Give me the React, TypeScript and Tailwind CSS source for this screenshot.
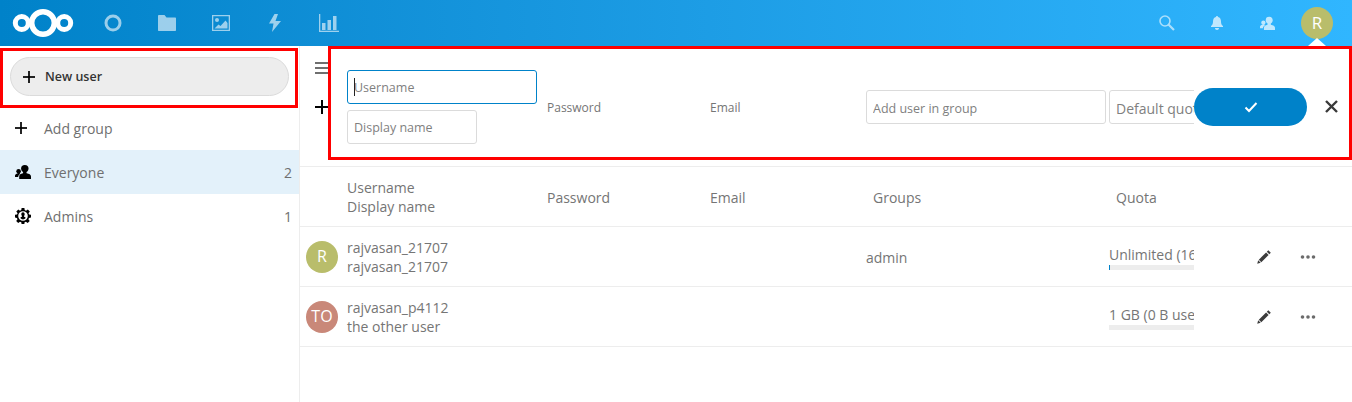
import React from 'react';

function Plus({ size = 14 }: { size?: number }) {
  return (
    <svg width={size} height={size} viewBox="0 0 14 14" fill="#000">
      <rect x="6" y="0" width="2" height="14" />
      <rect x="0" y="6" width="14" height="2" />
    </svg>
  );
}

function ContactsIcon({ color = '#000', size = 16 }: { color?: string; size?: number }) {
  return (
    <svg width={size} height={size} viewBox="0 0 16 16" fill={color}>
      <circle cx="9.800" cy="4.600" r="3.700" />
      <path d="M8.200 7h3.200l.2 2.200c2.500.5 4.400 1.400 4.400 3.300V15H4.200v-2.500c0-1.900 1.500-2.800 3.800-3.300z" />
      <circle cx="3.600" cy="7.200" r="2.300" />
      <path d="M2.600 9h2l.6 1C4 10.600 3.200 11.500 3.200 13H0v-1.400C0 10.400 1.100 9.700 2.600 9.400z" />
    </svg>
  );
}

function AdminIcon() {
  return (
    <svg width="16" height="16" viewBox="0 0 16 16" fill="#000">
      <path
        fillRule="evenodd"
        d="M6.600 0h2.800l.3 2.100 1.300.6L12.800 1.400l2 2-1.300 1.800.6 1.300 1.900.3v2.800l-2 .4-.6 1.200 1.300 1.800-2 2-1.800-1.300-1.300.6-.3 2H6.600l-.3-2-1.300-.6-1.800 1.300-2-2 1.300-1.800-.6-1.200-1.900-.4V6.800l2-.3.6-1.300-1.300-1.800 2-2 1.700 1.300 1.300-.6zM8 3.200a4.800 4.800 0 100 9.600 4.800 4.800 0 000-9.600z"
      />
      <path d="M8 4.300c-1 0-1.700.8-1.700 1.900 0 .7.300 1.300.7 1.700.1.400 0 .7-.3.800-.7.300-1.300.6-1.400 1.400.8.900 1.700 1.400 2.700 1.400s2-.5 2.700-1.400c-.1-.8-.7-1.100-1.400-1.400-.3-.1-.4-.4-.3-.8.400-.4.700-1 .7-1.700 0-1.100-.7-1.900-1.700-1.900z" />
    </svg>
  );
}

function Pencil() {
  return (
    <svg width="16" height="16" viewBox="0 0 16 16" fill="#3c3c3c">
      <path d="M12.300 1.200l2.500 2.500-1.500 1.500-2.500-2.500z" />
      <path d="M10.100 3.400l2.500 2.500-7.300 7.300-2.500-2.500z" />
      <path d="M2.200 11.300l2.500 2.500-3.500 1z" />
    </svg>
  );
}

function MoreDots() {
  return (
    <svg width="16" height="4" viewBox="0 0 16 4" fill="#6b6b6b">
      <circle cx="2.500" cy="2" r="1.800" />
      <circle cx="8" cy="2" r="1.800" />
      <circle cx="13.500" cy="2" r="1.800" />
    </svg>
  );
}

function Logo() {
  return (
    <svg width="62" height="30" viewBox="0 0 62 30" fill="none" stroke="#fff">
      <circle cx="31" cy="15" r="11.300" strokeWidth="5.500" />
      <circle cx="9.800" cy="15" r="6.500" strokeWidth="5" />
      <circle cx="52.200" cy="15" r="6.500" strokeWidth="5" />
    </svg>
  );
}

function NavIcons() {
  return (
    <div className="flex items-center opacity-60">
      <div className="w-[54px] h-[46px] flex items-center justify-center">
        <svg width="18" height="18" viewBox="0 0 18 18" fill="none" stroke="#fff" strokeWidth="3">
          <circle cx="9" cy="9" r="7" />
        </svg>
      </div>
      <div className="w-[54px] h-[46px] flex items-center justify-center">
        <svg width="18" height="16" viewBox="0 0 18 16" fill="#fff">
          <path d="M0 1c0-.5.4-1 1-1h5.500l2 2.500H17c.6 0 1 .4 1 1V15c0 .6-.4 1-1 1H1c-.6 0-1-.4-1-1z" />
        </svg>
      </div>
      <div className="w-[54px] h-[46px] flex items-center justify-center">
        <svg width="18" height="16" viewBox="0 0 18 16" fill="#fff">
          <path
            fillRule="evenodd"
            d="M0 0h18v16H0zM1.300 1.300v13.400h15.400V1.300z"
          />
          <circle cx="5" cy="5" r="2" />
          <path d="M2.500 13.500l4-4 2 1.500 5-5.500 2 2.500v5.500z" />
        </svg>
      </div>
      <div className="w-[54px] h-[46px] flex items-center justify-center">
        <svg width="12" height="18" viewBox="0 0 12 18" fill="#fff">
          <path d="M5.500 0L0 9.500h4.500L3 18l9-11H6.500L9 0z" />
        </svg>
      </div>
      <div className="w-[54px] h-[46px] flex items-center justify-center">
        <svg width="20" height="18" viewBox="0 0 20 18" fill="#fff">
          <rect x="0" y="0" width="1.300" height="18" />
          <rect x="0" y="16.700" width="20" height="1.300" />
          <rect x="3" y="9" width="3.500" height="7" />
          <rect x="8.500" y="6" width="3.500" height="10" />
          <rect x="14" y="2" width="3.500" height="14" />
        </svg>
      </div>
    </div>
  );
}

function Header() {
  return (
    <header className="relative h-[46px] flex items-center justify-between bg-gradient-to-r from-[#0082c9] to-[#30b6ff]">
      <div className="flex items-center">
        <div className="pl-[12px] w-[86px] flex items-center">
          <Logo />
        </div>
        <NavIcons />
      </div>
      <div className="flex items-center pr-[19px]">
        <div className="w-[50px] flex justify-center opacity-60">
          <svg width="16" height="16" viewBox="0 0 16 16" fill="none" stroke="#fff">
            <circle cx="6" cy="6" r="5" strokeWidth="1.600" />
            <path d="M9.500 9.500L15 15" strokeWidth="2.200" />
          </svg>
        </div>
        <div className="w-[50px] flex justify-center opacity-70">
          <svg width="12" height="14" viewBox="0 0 12 14" fill="#fff">
            <path d="M6 0c.7 0 1 .5 1 1 2.100.5 3 2.200 3 4.500 0 2 .6 3.500 2 4.500v1H0v-1c1.400-1 2-2.500 2-4.500C2 3.200 2.900 1.500 5 1c0-.5.300-1 1-1z" />
            <path d="M4 12h4c0 1-.8 2-2 2s-2-1-2-2z" />
          </svg>
        </div>
        <div className="w-[50px] flex justify-center opacity-70">
          <ContactsIcon color="#fff" size={15} />
        </div>
        <div className="ml-[9px] w-[32px] h-[32px] rounded-full bg-[#b9bd6b] flex items-center justify-center text-white text-[17px]">
          R
        </div>
      </div>
      <div className="absolute right-[26px] bottom-0 w-0 h-0 border-x-[9px] border-x-transparent border-b-[8px] border-b-white" />
    </header>
  );
}

function GroupRow({ icon, label, count, active }: { icon: React.ReactNode; label: string; count?: number; active?: boolean }) {
  return (
    <div className={`h-[44px] flex items-center pl-[15px] pr-[7px] text-[14px] text-[#6f6f6f] ${active ? 'bg-[#e3f1fa]' : ''}`}>
      <div className="w-[29px] flex items-center">{icon}</div>
      <span className="flex-1">{label}</span>
      {count !== undefined && <span>{count}</span>}
    </div>
  );
}

function Sidebar() {
  return (
    <aside className="w-[300px] shrink-0 border-r border-[#ededed] pt-[11px]">
      <div className="mx-[10px] w-[279px] h-[39px] rounded-full bg-[#ededed] border border-[#dbdbdb] flex items-center pl-[12px] pt-[1px] text-[12.5px] font-semibold text-[#333]">
        <Plus size={12} />
        <span className="ml-[10px]">New user</span>
      </div>
      <div className="mt-[10px]">
        <GroupRow icon={<Plus size={12} />} label="Add group" />
        <GroupRow icon={<ContactsIcon />} label="Everyone" count={2} active />
        <GroupRow icon={<AdminIcon />} label="Admins" count={1} />
      </div>
    </aside>
  );
}

const inputClass =
  'h-[34px] rounded-[3px] border bg-white px-[6px] pt-[2px] text-[12.5px] text-[#6f6f6f] placeholder:text-[#7f7f7f] outline-none font-[inherit]';

function NewUserForm() {
  return (
    <div className="relative h-[121px] pt-[1px] flex items-center border-b border-[#ededed] text-[12px] text-[#757575]">
      <div className="absolute left-[15px] top-[16px] flex flex-col gap-[3px]">
        <div className="w-[13px] h-[2px] bg-[#6f6f6f]" />
        <div className="w-[13px] h-[2px] bg-[#6f6f6f]" />
        <div className="w-[13px] h-[2px] bg-[#6f6f6f]" />
      </div>
      <div className="w-[47px] pl-[15px] flex items-center">
        <Plus size={14} />
      </div>
      <div className="w-[200px] flex flex-col gap-[6px]">
        <div className="relative w-[190px]">
          <input readOnly placeholder="Username" className={`${inputClass} w-full border-[#0082c9]`} />
          <div className="absolute left-[7px] top-[8px] w-px h-[18px] bg-[#222]" />
        </div>
        <input readOnly placeholder="Display name" className={`${inputClass} w-[130px] border-[#dbdbdb]`} />
      </div>
      <div className="w-[163px] pt-[3px]">Password</div>
      <div className="w-[156px] pt-[3px]">Email</div>
      <div className="w-[243px] pt-[1px]">
        <input readOnly placeholder="Add user in group" className={`${inputClass} w-[240px] border-[#dbdbdb]`} />
      </div>
      <div className="w-[85px] overflow-hidden pt-[1px]">
        <input readOnly placeholder="Default quota" className={`${inputClass} w-[120px] text-[14px] border-[#dbdbdb]`} />
      </div>
      <button className="w-[113px] h-[38px] rounded-full bg-[#0082c9] flex items-center justify-center">
        <svg width="14" height="12" viewBox="0 0 14 12" fill="none" stroke="#fff" strokeWidth="2">
          <path d="M1.500 6.500L5 10l7.500-8" />
        </svg>
      </button>
      <div className="ml-[18px]">
        <svg width="13" height="13" viewBox="0 0 13 13" fill="none" stroke="#3a3a3a" strokeWidth="2.400">
          <path d="M1 1l11 11M12 1L1 12" />
        </svg>
      </div>
    </div>
  );
}

function ColumnHeader() {
  return (
    <div className="h-[60px] flex items-center border-b border-[#ededed] text-[14px] leading-[19px] text-[#757575]">
      <div className="w-[47px]" />
      <div className="w-[200px]">
        <div>Username</div>
        <div>Display name</div>
      </div>
      <div className="w-[163px] pt-[2px]">Password</div>
      <div className="w-[156px] pt-[2px]">Email</div>
      <div className="w-[243px] pl-[7px] pt-[2px]">Groups</div>
      <div className="w-[85px] pl-[7px] pt-[2px]">Quota</div>
    </div>
  );
}

type User = {
  initials: string;
  color: string;
  username: string;
  displayName: string;
  group: string;
  quota: string;
  used: number;
};

const users: User[] = [
  { initials: 'R', color: 'bg-[#b9bd6b]', username: 'rajvasan_21707', displayName: 'rajvasan_21707', group: 'admin', quota: 'Unlimited (16 MB used)', used: 1 },
  { initials: 'TO', color: 'bg-[#c98879]', username: 'rajvasan_p4112', displayName: 'the other user', group: '', quota: '1 GB (0 B used)', used: 0 },
];

function UserRow({ user }: { user: User }) {
  return (
    <div className="h-[60px] flex items-center border-b border-[#ededed] text-[14px] leading-[19px] text-[#757575]">
      <div className="w-[47px] pl-[6px]">
        <div className={`w-[32px] h-[32px] rounded-full ${user.color} flex items-center justify-center text-white text-[16px]`}>
          {user.initials}
        </div>
      </div>
      <div className="w-[200px]">
        <div>{user.username}</div>
        <div>{user.displayName}</div>
      </div>
      <div className="w-[163px]" />
      <div className="w-[156px]" />
      <div className="w-[243px] pt-[2px]">{user.group}</div>
      <div className="w-[85px] overflow-hidden pt-[2px]">
        <div className="whitespace-nowrap leading-[20px]">{user.quota}</div>
        <div className="h-[5px] bg-[#ededed]">
          <div className="h-full bg-[#0082c9]" style={{ width: user.used }} />
        </div>
      </div>
      <div className="ml-[62px]">
        <Pencil />
      </div>
      <div className="ml-[28px]">
        <MoreDots />
      </div>
    </div>
  );
}

export default function App() {
  return (
    <div className="relative h-[402px] w-[1352px] overflow-hidden bg-white font-['Open_Sans',sans-serif]">
      <Header />
      <div className="flex h-[356px]">
        <Sidebar />
        <main className="flex-1">
          <NewUserForm />
          <ColumnHeader />
          {users.map((user) => (
            <UserRow key={user.username} user={user} />
          ))}
        </main>
      </div>
      {/* red annotation boxes from the screenshot */}
      <div className="absolute left-0 top-[48px] w-[298px] h-[60px] border-[3px] border-[#ff0000]" />
      <div className="absolute left-[328px] top-[46px] right-0 h-[114px] border-[3px] border-[#ff0000]" />
    </div>
  );
}
